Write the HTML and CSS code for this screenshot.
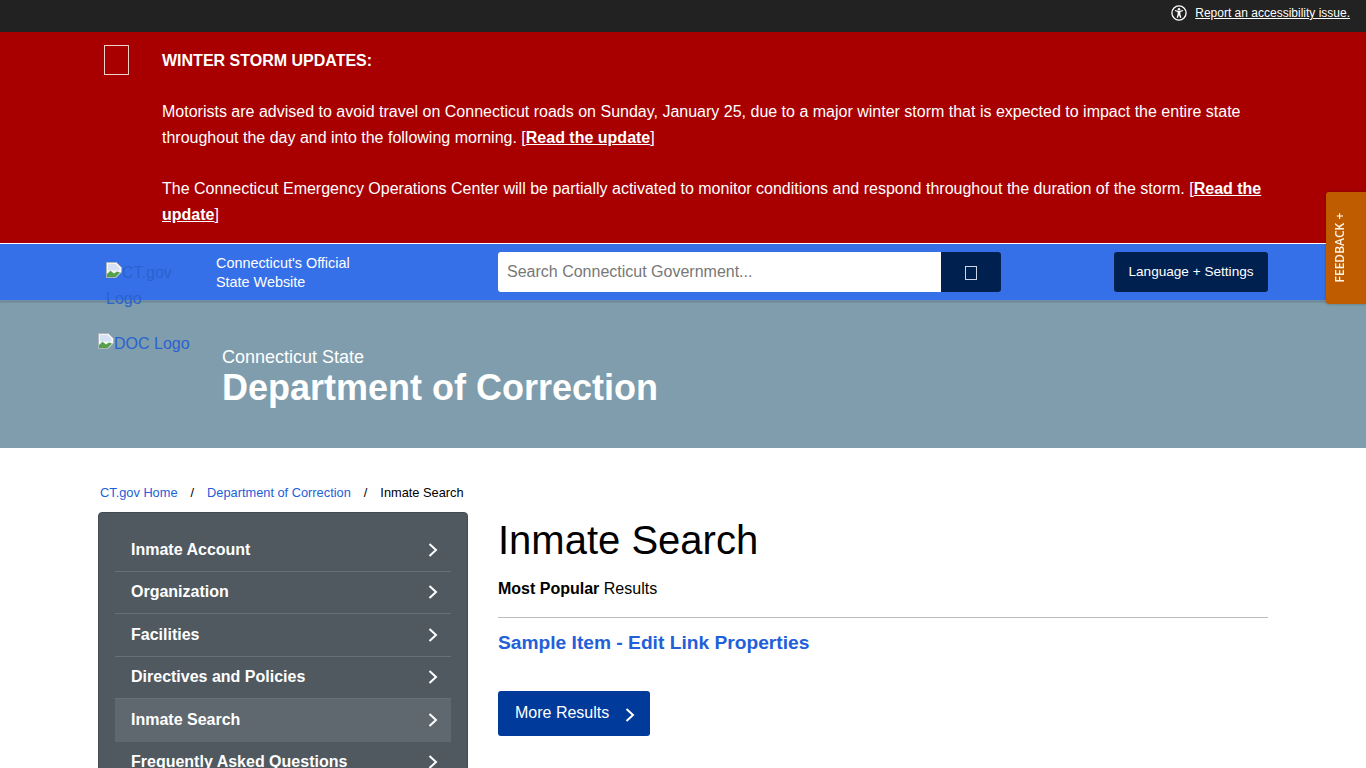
FILE: index.html
```html
<!DOCTYPE html>
<html lang="en">
<head>
    <meta charset="UTF-8">
    <meta name="viewport" content="width=device-width, initial-scale=1.0">
    <title>Inmate Search</title>
    <link rel="stylesheet" href="styles.css">
</head>
<body>
    <div class="topbar">
        <div class="topbar-inner">
            <svg class="a11y-icon" width="16" height="16" viewBox="0 0 16 16" aria-hidden="true">
                <circle cx="8" cy="8" r="7.1" fill="none" stroke="#fff" stroke-width="1.3"/>
                <circle cx="8" cy="4.2" r="1.25" fill="#fff"/>
                <path d="M3.8 6.1 L6.6 6.9 V9.2 L5.6 12.6 L6.8 12.9 L8 9.9 L9.2 12.9 L10.4 12.6 L9.4 9.2 V6.9 L12.2 6.1 L11.9 5.1 L8 6 L4.1 5.1 Z" fill="#fff"/>
            </svg>
            <a href="#" class="a11y-link">Report an accessibility issue.</a>
        </div>
    </div>

    <div class="alert">
        <div class="alert-inner">
            <div class="alert-icon-col"><span class="missing-glyph alert-glyph"></span></div>
            <div class="alert-text">
                <p><strong>WINTER STORM UPDATES:</strong></p>
                <p>&nbsp;</p>
                <p>Motorists are advised to avoid travel on Connecticut roads on Sunday, January 25, due to a major winter storm that is expected to impact the entire state throughout the day and into the following morning. [<a href="#">Read the update</a>]</p>
                <p>&nbsp;</p>
                <p>The Connecticut Emergency Operations Center will be partially activated to monitor conditions and respond throughout the duration of the storm. [<a href="#">Read the update</a>]</p>
            </div>
        </div>
    </div>

    <header class="state-bar">
        <div class="state-inner">
            <a href="#" class="ct-logo">
                <svg class="broken-img" width="16" height="16" viewBox="0 0 16 16" aria-hidden="true">
                    <path d="M0.5 0.5 H10.5 L15.5 5.5 V10 L10 15.5 H0.5 Z" fill="#f6f6f6" stroke="#aeb4b8"/>
                    <path d="M2 2 H9.5 L13.5 6 V8.5 L2 8.5 Z" fill="#d5e2f5"/>
                    <path d="M1 15 V12 L4.5 8.8 L8 11.5 L11 9.5 L14 10.5 L9.5 15 Z" fill="#55a04c"/>
                </svg>CT.gov Logo
            </a>
            <div class="official">Connecticut's Official<br>State Website</div>
            <form class="search" onsubmit="return false">
                <input type="text" class="search-input" placeholder="Search Connecticut Government...">
                <button class="search-btn" type="button" aria-label="Search"><span class="missing-glyph"></span></button>
            </form>
            <button class="lang-btn" type="button">Language + Settings</button>
        </div>
    </header>

    <section class="hero">
        <div class="hero-inner">
            <a href="#" class="doc-logo">
                <svg class="broken-img" width="16" height="16" viewBox="0 0 16 16" aria-hidden="true">
                    <path d="M0.5 0.5 H10.5 L15.5 5.5 V10 L10 15.5 H0.5 Z" fill="#f6f6f6" stroke="#aeb4b8"/>
                    <path d="M2 2 H9.5 L13.5 6 V8.5 L2 8.5 Z" fill="#d5e2f5"/>
                    <path d="M1 15 V12 L4.5 8.8 L8 11.5 L11 9.5 L14 10.5 L9.5 15 Z" fill="#55a04c"/>
                </svg>DOC Logo
            </a>
            <div class="hero-title">
                <div class="hero-sub">Connecticut State</div>
                <div class="hero-main">Department of Correction</div>
            </div>
        </div>
    </section>

    <main class="content">
        <nav class="crumbs">
            <a href="#">CT.gov Home</a>
            <span class="sep">/</span>
            <a href="#">Department of Correction</a>
            <span class="sep">/</span>
            <span>Inmate Search</span>
        </nav>
        <div class="columns">
            <aside class="side">
                <ul class="side-list">
                    <li><a href="#">Inmate Account<svg class="chev" width="12" height="16" viewBox="0 0 12 16"><path d="M2.5 2 L9 8 L2.5 14" fill="none" stroke="#fff" stroke-width="2"/></svg></a></li>
                    <li><a href="#">Organization<svg class="chev" width="12" height="16" viewBox="0 0 12 16"><path d="M2.5 2 L9 8 L2.5 14" fill="none" stroke="#fff" stroke-width="2"/></svg></a></li>
                    <li><a href="#">Facilities<svg class="chev" width="12" height="16" viewBox="0 0 12 16"><path d="M2.5 2 L9 8 L2.5 14" fill="none" stroke="#fff" stroke-width="2"/></svg></a></li>
                    <li><a href="#">Directives and Policies<svg class="chev" width="12" height="16" viewBox="0 0 12 16"><path d="M2.5 2 L9 8 L2.5 14" fill="none" stroke="#fff" stroke-width="2"/></svg></a></li>
                    <li class="current"><a href="#">Inmate Search<svg class="chev" width="12" height="16" viewBox="0 0 12 16"><path d="M2.5 2 L9 8 L2.5 14" fill="none" stroke="#fff" stroke-width="2"/></svg></a></li>
                    <li><a href="#">Frequently Asked Questions<svg class="chev" width="12" height="16" viewBox="0 0 12 16"><path d="M2.5 2 L9 8 L2.5 14" fill="none" stroke="#fff" stroke-width="2"/></svg></a></li>
                </ul>
            </aside>
            <div class="main-col">
                <h1>Inmate Search</h1>
                <p class="popular"><strong>Most Popular</strong> Results</p>
                <hr class="rule">
                <a href="#" class="result-link">Sample Item - Edit Link Properties</a>
                <a href="#" class="more-btn"><span class="more-label">More Results</span><svg class="chev-more" width="12" height="16" viewBox="0 0 12 16"><path d="M2.5 2 L9 8 L2.5 14" fill="none" stroke="#fff" stroke-width="2"/></svg></a>
            </div>
        </div>
    </main>

    <a href="#" class="feedback"><span>FEEDBACK +</span></a>
</body>
</html>
```
FILE: styles.css
```css
html, body {
    margin: 0;
    padding: 0;
}

body {
    font-family: "Liberation Sans", Arial, sans-serif;
    font-size: 16px;
    line-height: 1.6;
    color: #000;
    background: #fff;
    height: 768px;
    overflow: hidden;
}

a {
    color: #2160d8;
    text-decoration: none;
}

/* top bar */
.topbar {
    height: 32px;
    background: #222;
}

.topbar-inner {
    display: flex;
    justify-content: flex-end;
    align-items: center;
    height: 26px;
    padding-right: 16px;
    gap: 8px;
}

.a11y-link {
    color: #fff;
    font-size: 12px;
    line-height: 16px;
    text-decoration: underline;
}

/* alert */
.alert {
    background: #a80000;
    color: #fff;
    height: 211px;
    border-bottom: 1px solid #fff;
    overflow: hidden;
}

.alert-inner {
    display: flex;
    width: 1170px;
    margin: 0 auto;
    padding-top: 16px;
}

.alert-icon-col {
    flex: 0 0 64px;
    padding-left: 6px;
    box-sizing: border-box;
}

.alert-text {
    flex: 1;
}

.alert-text p {
    margin: 0;
}

.alert-text a {
    color: #fff;
    font-weight: bold;
    text-decoration: underline;
}

.missing-glyph {
    display: inline-block;
    width: 10px;
    height: 12px;
    border: 1px solid #cdd6e4;
    vertical-align: middle;
}

.alert-glyph {
    display: block;
    width: 23px;
    height: 28px;
    margin-top: -3px;
    border-color: #f0d0c8;
}

/* blue state bar */
.state-bar {
    height: 57px;
    background: #3670e8;
    border-bottom: 1px solid #6f8fa8;
    box-sizing: border-box;
    box-shadow: 0 1px 2px rgba(0, 0, 0, 0.2);
    position: relative;
    z-index: 2;
}

.state-inner {
    display: flex;
    align-items: flex-start;
    width: 1170px;
    margin: 0 auto;
}

.broken-img {
    vertical-align: top;
}

.ct-logo {
    flex: 0 0 118px;
    box-sizing: border-box;
    padding: 16px 38px 0 8px;
    color: #2a62cf;
    line-height: 26px;
    height: 56px;
}

.ct-logo .broken-img {
    margin-top: 2px;
}

.official {
    flex: 0 0 282px;
    padding-top: 10px;
    color: #fff;
    font-size: 14.4px;
    line-height: 19px;
}

.search {
    display: flex;
    flex: 0 0 503px;
    margin-top: 8px;
}

.search-input {
    flex: 1;
    min-width: 0;
    height: 40px;
    box-sizing: border-box;
    border: 0;
    border-radius: 3px 0 0 3px;
    padding: 0 9px;
    font-family: inherit;
    font-size: 16px;
    background: #fff;
}

.search-input::placeholder {
    color: #777;
    opacity: 1;
}

.search-btn {
    width: 60px;
    height: 40px;
    border: 0;
    border-radius: 0 3px 3px 0;
    background: #002050;
    padding: 0;
}

.lang-btn {
    margin-left: auto;
    margin-top: 8px;
    width: 154px;
    height: 40px;
    border: 0;
    border-radius: 3px;
    background: #002050;
    color: #fff;
    font-family: inherit;
    font-size: 13.6px;
    padding: 0 0 2px;
}

/* hero */
.hero {
    height: 147px;
    background: #7f9dac;
}

.hero-inner {
    display: flex;
    width: 1170px;
    margin: 0 auto;
}

.doc-logo {
    flex: 0 0 124px;
    padding-top: 30px;
    line-height: 25px;
    color: #2a62cf;
}

.doc-logo .broken-img {
    margin-top: 2px;
}

.hero-title {
    padding-top: 44px;
    color: #fff;
}

.hero-sub {
    font-size: 18px;
    line-height: 24px;
}

.hero-main {
    font-size: 36px;
    font-weight: bold;
    line-height: 38px;
}

/* content */
.content {
    width: 1170px;
    margin: 0 auto;
}

.crumbs {
    display: flex;
    padding: 35px 0 0 2px;
    font-size: 12.8px;
    line-height: 20px;
    height: 64px;
    box-sizing: border-box;
}

.crumbs .sep {
    padding: 0 13px;
}

.columns {
    display: flex;
    align-items: flex-start;
}

.side {
    flex: 0 0 370px;
    box-sizing: border-box;
    background: #50595f;
    border: 1px solid #444c52;
    border-radius: 4px;
    padding: 16px 16px;
}

.side-list {
    list-style: none;
    margin: 0;
    padding: 0;
}

.side-list li {
    border-bottom: 1px solid #687076;
}

.side-list li.current {
    background: #5f686e;
    border-bottom-color: #5f686e;
}

.side-list a {
    display: flex;
    justify-content: space-between;
    align-items: center;
    height: 41.5px;
    padding: 0 12px 0 16px;
    color: #fff;
    font-weight: bold;
    line-height: 20px;
}

.main-col {
    flex: 1;
    padding-left: 30px;
}

h1 {
    font-size: 40px;
    font-weight: normal;
    line-height: 48px;
    margin: 4px 0 0;
}

.popular {
    margin: 13px 0 0;
    line-height: 24px;
}

.rule {
    margin: 16px 0 0;
    border: 0;
    border-top: 1px solid #bbb;
}

.result-link {
    display: block;
    margin-top: 11px;
    font-size: 19.2px;
    font-weight: bold;
    line-height: 28px;
}

.more-btn {
    display: inline-flex;
    align-items: center;
    margin-top: 34px;
    width: 152px;
    height: 45px;
    box-sizing: border-box;
    padding: 0 14px 0 17px;
    justify-content: space-between;
    background: #003a9b;
    border-radius: 3px;
    color: #fff;
}

.more-label {
    margin-bottom: 2px;
}

.chev-more {
    margin-top: 3px;
}

/* feedback tab, sits over the page */
.feedback {
    position: fixed;
    top: 192px;
    right: 0;
    width: 40px;
    height: 112px;
    padding-right: 12px;
    box-sizing: border-box;
    display: flex;
    align-items: center;
    justify-content: center;
    background: #bf5c00;
    border-radius: 3px 0 0 3px;
    box-shadow: 0 0 3px rgba(0, 0, 0, 0.3);
    z-index: 5;
    color: #fff2e0;
    font-family: "Open Sans", sans-serif;
    font-size: 12px;
    font-weight: 600;
}

.feedback span {
    transform: rotate(-90deg);
    white-space: nowrap;
}
```
